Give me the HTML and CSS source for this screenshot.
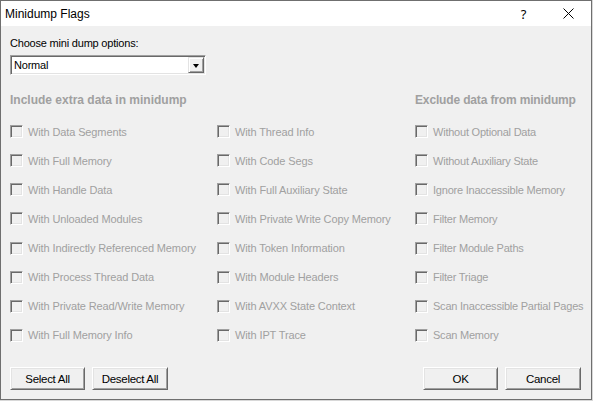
FILE: index.html
```html
<!DOCTYPE html>
<html>
<head>
<meta charset="utf-8">
<link rel="stylesheet" href="styles.css">
</head>
<body>
<div class="window">
  <div class="titlebar">
    <div class="title">Minidump Flags</div>
    <div class="tb-btn help">?</div>
    <div class="tb-btn close">
      <svg width="11" height="11" viewBox="0 0 11 11"><path d="M0.5 0.5 L10.5 10.5 M10.5 0.5 L0.5 10.5" stroke="#000" stroke-width="1" fill="none"/></svg>
    </div>
  </div>
  <div class="content">
    <div class="choose-label">Choose mini dump options:</div>
    <div class="combo">
      <span class="combo-text">Normal</span>
      <span class="combo-btn"><span class="arrow"></span></span>
    </div>
    <div class="groups">
      <div class="gh gh-include">Include extra data in minidump</div>
      <div class="gh gh-exclude">Exclude data from minidump</div>

      <div class="col col1">
        <div class="cb"><span class="box"></span>With Data Segments</div>
        <div class="cb"><span class="box"></span>With Full Memory</div>
        <div class="cb"><span class="box"></span>With Handle Data</div>
        <div class="cb"><span class="box"></span>With Unloaded Modules</div>
        <div class="cb"><span class="box"></span>With Indirectly Referenced Memory</div>
        <div class="cb"><span class="box"></span>With Process Thread Data</div>
        <div class="cb"><span class="box"></span>With Private Read/Write Memory</div>
        <div class="cb"><span class="box"></span>With Full Memory Info</div>
      </div>
      <div class="col col2">
        <div class="cb"><span class="box"></span>With Thread Info</div>
        <div class="cb"><span class="box"></span>With Code Segs</div>
        <div class="cb"><span class="box"></span>With Full Auxiliary State</div>
        <div class="cb"><span class="box"></span>With Private Write Copy Memory</div>
        <div class="cb"><span class="box"></span>With Token Information</div>
        <div class="cb"><span class="box"></span>With Module Headers</div>
        <div class="cb"><span class="box"></span>With AVXX State Context</div>
        <div class="cb"><span class="box"></span>With IPT Trace</div>
      </div>
      <div class="col col3">
        <div class="cb"><span class="box"></span>Without Optional Data</div>
        <div class="cb"><span class="box"></span>Without Auxiliary State</div>
        <div class="cb"><span class="box"></span>Ignore Inaccessible Memory</div>
        <div class="cb"><span class="box"></span>Filter Memory</div>
        <div class="cb"><span class="box"></span>Filter Module Paths</div>
        <div class="cb"><span class="box"></span>Filter Triage</div>
        <div class="cb"><span class="box"></span>Scan Inaccessible Partial Pages</div>
        <div class="cb"><span class="box"></span>Scan Memory</div>
      </div>
    </div>
    <div class="footer">
      <div class="btn-group">
        <div class="btn w74">Select All</div>
        <div class="btn w75">Deselect All</div>
      </div>
      <div class="btn-group">
        <div class="btn w74">OK</div>
        <div class="btn w75">Cancel</div>
      </div>
    </div>
  </div>
</div>
</body>
</html>
```
FILE: styles.css
```css
html, body {
  margin: 0;
  padding: 0;
  background: #d8d8d8;
}
.window {
  width: 592px;
  height: 400px;
  box-sizing: border-box;
  border: 1px solid #6f6f6f;
  background: #f0f0f0;
  display: flex;
  flex-direction: column;
  font-family: "Liberation Sans", Arial, sans-serif;
}
.titlebar {
  height: 25px;
  background: #ffffff;
  display: flex;
  align-items: center;
}
.title {
  flex: 1;
  padding-left: 4px;
  font-size: 12px;
  color: #000;
}
.tb-btn {
  width: 45px;
  height: 25px;
  display: flex;
  align-items: center;
  justify-content: center;
  font-family: "Noto Sans", sans-serif;
  font-size: 13px;
  color: #000;
}
.content {
  flex: 1;
  display: flex;
  flex-direction: column;
  padding: 0 10px 9px 9px;
}
.choose-label {
  margin-top: 10px;
  font-size: 11px;
  line-height: 15px;
  letter-spacing: -0.2px;
  color: #000;
}
.combo {
  margin-top: 4px;
  width: 196px;
  height: 20px;
  box-sizing: border-box;
  background: #fff;
  border-top: 1px solid #a0a0a0;
  border-left: 1px solid #a0a0a0;
  border-right: 1px solid #ffffff;
  border-bottom: 1px solid #ffffff;
  box-shadow: inset 1px 1px 0 #696969, inset -1px -1px 0 #e3e3e3;
  display: flex;
  align-items: center;
  justify-content: space-between;
  padding: 1px 1px 1px 3px;
}
.combo-text {
  font-size: 11px;
  color: #000;
  letter-spacing: -0.2px;
}
.combo-btn {
  width: 16px;
  height: 16px;
  box-sizing: border-box;
  background: #f0f0f0;
  border-top: 1px solid #e3e3e3;
  border-left: 1px solid #e3e3e3;
  border-right: 1px solid #696969;
  border-bottom: 1px solid #696969;
  box-shadow: inset 1px 1px 0 #ffffff, inset -1px -1px 0 #a0a0a0;
  display: flex;
  align-items: center;
  justify-content: center;
}
.arrow {
  width: 0;
  height: 0;
  border-left: 3.5px solid transparent;
  border-right: 3.5px solid transparent;
  border-top: 4px solid #000;
  margin-top: 1px;
}
.groups {
  margin-top: 18px;
  display: grid;
  grid-template-columns: 207px 198px auto;
  grid-template-rows: 32px auto;
  color: #a0a0a0;
}
.gh {
  font-weight: bold;
  font-size: 12px;
  line-height: 14px;
  grid-row: 1;
}
.gh-include { grid-column: 1 / 3; }
.gh-exclude { grid-column: 3; letter-spacing: -0.15px; }
.col {
  grid-row: 2;
  display: grid;
  grid-auto-rows: 29.15px;
  align-items: start;
}
.cb {
  display: flex;
  align-items: center;
  height: 13px;
  gap: 5px;
  font-size: 11px;
  letter-spacing: -0.12px;
  white-space: nowrap;
}
.col3 .cb { letter-spacing: -0.22px; }
.box {
  width: 13px;
  height: 13px;
  box-sizing: border-box;
  flex: none;
  background: #f0f0f0;
  border-top: 1px solid #a0a0a0;
  border-left: 1px solid #a0a0a0;
  border-right: 1px solid #ffffff;
  border-bottom: 1px solid #ffffff;
  box-shadow: inset 1px 1px 0 #696969, inset -1px -1px 0 #e3e3e3;
}
.footer {
  margin-top: auto;
  display: flex;
  justify-content: space-between;
}
.btn-group {
  display: flex;
  gap: 7px;
}
.btn {
  height: 23px;
  box-sizing: border-box;
  background: #f0f0f0;
  border-top: 1px solid #ffffff;
  border-left: 1px solid #ffffff;
  border-right: 1px solid #696969;
  border-bottom: 1px solid #696969;
  box-shadow: inset 1px 1px 0 #e3e3e3, inset -1px -1px 0 #a0a0a0;
  display: flex;
  align-items: center;
  justify-content: center;
  font-size: 11.5px;
  letter-spacing: -0.3px;
  color: #000;
}
.w74 { width: 75px; }
.w75 { width: 76px; }
```
